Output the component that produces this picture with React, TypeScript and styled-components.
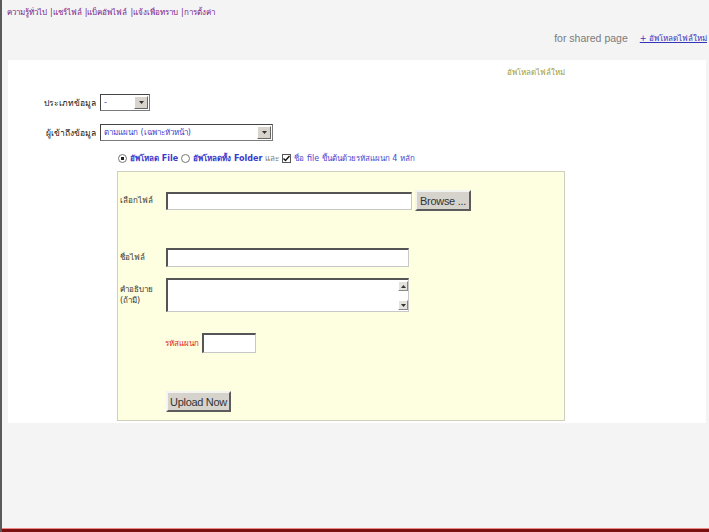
import styled, { createGlobalStyle } from 'styled-components'

const GlobalStyle = createGlobalStyle`
  html, body {
    margin: 0;
    padding: 0;
    background: #f4f4f4;
  }
  body {
    font-family: Tahoma, "DejaVu Sans", "Noto Sans", sans-serif;
    font-size: 8px;
  }
`

const Page = styled.div`
  display: flex;
  flex-direction: column;
  width: 709px;
  height: 532px;
  box-sizing: border-box;
  border-left: 2px solid #5a5a5a;
  background: #f4f4f5;
  overflow: hidden;
`

const TopNav = styled.div`
  display: flex;
  height: 24px;
  padding: 6px 0 0 5px;
  box-sizing: border-box;
  font-size: 8px;
`

const NavLink = styled.a`
  color: #7a1d8a;
  text-decoration: none;
  margin-right: 3px;
`

const SharedBar = styled.div`
  display: flex;
  justify-content: flex-end;
  align-items: center;
  height: 36px;
  padding: 0 2px 8px 0;
  box-sizing: border-box;
`

const SharedLabel = styled.span`
  color: #7b7b7b;
  font-family: "Liberation Sans", Arial, sans-serif;
  font-size: 10.5px;
  margin-right: 12px;
`

const NewLink = styled.a`
  color: #3333bb;
  text-decoration: underline;
  font-size: 8px;
`

const Panel = styled.div`
  background: #fff;
  margin: 0 3px 0 6px;
  height: 363px;
  padding-top: 6px;
  box-sizing: border-box;
`

const PanelTitle = styled.div`
  display: flex;
  justify-content: flex-end;
  padding-right: 141px;
  color: #9a9a3a;
  font-size: 8px;
  height: 24px;
`

const FieldRow = styled.div<{ $top: number }>`
  display: flex;
  align-items: center;
  margin-top: ${(p) => p.$top}px;
`

const FieldLabel = styled.div`
  width: 92px;
  text-align: right;
  padding-right: 4px;
  box-sizing: border-box;
  color: #111;
  font-size: 8.5px;
`

const Select = styled.div<{ $w: number }>`
  display: flex;
  align-items: center;
  justify-content: space-between;
  width: ${(p) => p.$w}px;
  height: 17px;
  box-sizing: border-box;
  border: 1px solid #7a7a7a;
  border-top-color: #444;
  border-left-color: #444;
  background: #fff;
  color: #3c3ccc;
  font-size: 8px;
  padding-left: 3px;
`

const SelectArrow = styled.span`
  display: flex;
  align-items: center;
  justify-content: center;
  width: 14px;
  height: 13px;
  margin-right: 1px;
  background: #d8d4cc;
  border: 1px solid;
  border-color: #fff #666 #666 #fff;
  box-sizing: border-box;
`

const OptionRow = styled.div`
  display: flex;
  align-items: center;
  margin: 10px 0 0 110px;
  height: 14px;
  font-size: 8px;
  white-space: nowrap;
`

const OptStrong = styled.span`
  color: #3a3acc;
  font-weight: bold;
  margin-right: 3px;
`

const OptPlain = styled.span<{ $c: string }>`
  color: ${(p) => p.$c};
  margin-right: 3px;
`

const Radio = styled.span<{ $on?: boolean }>`
  display: inline-block;
  width: 7px;
  height: 7px;
  border: 1px solid #777;
  border-radius: 50%;
  margin-right: 3px;
  background: ${(p) => (p.$on ? 'radial-gradient(circle, #222 0 1.5px, #fff 2px)' : '#fff')};
`

const Check = styled.span`
  display: inline-flex;
  align-items: center;
  justify-content: center;
  width: 9px;
  height: 9px;
  border: 1px solid #555;
  background: #fff;
  margin-right: 3px;
  box-sizing: border-box;
`

const UploadBox = styled.div`
  margin: 6px 0 0 109px;
  width: 448px;
  height: 250px;
  box-sizing: border-box;
  background: #fefee0;
  border: 1px solid #cfcfc0;
  padding: 18px 0 0 2px;
`

const BoxRow = styled.div<{ $top: number; $indent?: number }>`
  display: flex;
  align-items: center;
  margin-top: ${(p) => p.$top}px;
  padding-left: ${(p) => p.$indent ?? 0}px;
`

const BoxLabel = styled.div<{ $red?: boolean }>`
  width: ${(p) => (p.$red ? 'auto' : '46px')};
  margin-right: ${(p) => (p.$red ? '3px' : '0')};
  color: ${(p) => (p.$red ? '#e02020' : '#333')};
  font-size: 8px;
  line-height: 11px;
`

const TextInput = styled.div<{ $w: number; $h: number }>`
  width: ${(p) => p.$w}px;
  height: ${(p) => p.$h}px;
  box-sizing: border-box;
  background: #fff;
  border: 1px solid #c8c8c8;
  border-top: 2px solid #555;
  border-left: 2px solid #555;
  display: flex;
  justify-content: flex-end;
`

const ScrollBar = styled.div`
  display: flex;
  flex-direction: column;
  justify-content: space-between;
  width: 10px;
  padding: 1px 0;
`

const ScrollBtn = styled.span`
  display: flex;
  align-items: center;
  justify-content: center;
  height: 10px;
  background: #e4e2dc;
  border: 1px solid;
  border-color: #fff #888 #888 #fff;
  box-sizing: border-box;
`

const Button = styled.div<{ $w: number }>`
  display: flex;
  align-items: center;
  justify-content: center;
  width: ${(p) => p.$w}px;
  height: 21px;
  box-sizing: border-box;
  background: #d6d3cc;
  border: 2px solid;
  border-color: #f4f4f0 #5c5c5c #5c5c5c #f4f4f0;
  color: #333;
  font-family: "Liberation Sans", Arial, sans-serif;
  font-size: 11px;
  letter-spacing: -0.3px;
`

const Gap = styled.div<{ $w: number }>`
  width: ${(p) => p.$w}px;
  flex: none;
`

const Spacer = styled.div`
  flex: 1;
`

const Footer = styled.div`
  height: 3px;
  background: #7a1010;
  border-top: 1px solid #e88;
`

const Tri = ({ up }: { up?: boolean }) => (
  <svg width="5" height="3" viewBox="0 0 5 3">
    <path d={up ? 'M0 3 L2.5 0 L5 3 Z' : 'M0 0 L5 0 L2.5 3 Z'} fill="#333" />
  </svg>
)

const navItems = ['ความรู้ทั่วไป', '|แชร์ไฟล์', '|แบ็คอัพไฟล์', '|แจ้งเพื่อทราบ', '|การตั้งค่า']

export default function App() {
  return (
    <>
      <GlobalStyle />
      <Page>
        <TopNav>
          {navItems.map((n) => (
            <NavLink key={n} href="#">
              {n}
            </NavLink>
          ))}
        </TopNav>
        <SharedBar>
          <SharedLabel>for shared page</SharedLabel>
          <NewLink href="#">+ อัพโหลดไฟล์ใหม่</NewLink>
        </SharedBar>
        <Panel>
          <PanelTitle>อัพโหลดไฟล์ใหม่</PanelTitle>
          <FieldRow $top={4}>
            <FieldLabel>ประเภทข้อมูล</FieldLabel>
            <Select $w={50}>
              <span>-</span>
              <SelectArrow>
                <Tri />
              </SelectArrow>
            </Select>
          </FieldRow>
          <FieldRow $top={13}>
            <FieldLabel>ผู้เข้าถึงข้อมูล</FieldLabel>
            <Select $w={173}>
              <span>ตามแผนก (เฉพาะหัวหน้า)</span>
              <SelectArrow>
                <Tri />
              </SelectArrow>
            </Select>
          </FieldRow>
          <OptionRow>
            <Radio $on />
            <OptStrong>อัพโหลด File</OptStrong>
            <Radio />
            <OptStrong>อัพโหลดทั้ง Folder</OptStrong>
            <OptPlain $c="#777">และ</OptPlain>
            <Check>
              <svg width="7" height="7" viewBox="0 0 7 7">
                <path d="M0.5 3.5 L2.5 5.5 L6.5 1" stroke="#111" strokeWidth="1.4" fill="none" />
              </svg>
            </Check>
            <OptPlain $c="#4848d0">ชื่อ file ขึ้นต้นด้วยรหัสแผนก 4 หลัก</OptPlain>
          </OptionRow>
          <UploadBox>
            <BoxRow $top={0}>
              <BoxLabel>เลือกไฟล์</BoxLabel>
              <TextInput $w={246} $h={18} />
              <Gap $w={3} />
              <Button $w={56}>Browse ...</Button>
            </BoxRow>
            <BoxRow $top={37}>
              <BoxLabel>ชื่อไฟล์</BoxLabel>
              <TextInput $w={243} $h={19} />
            </BoxRow>
            <BoxRow $top={11}>
              <BoxLabel>
                คำอธิบาย
                <br />
                (ถ้ามี)
              </BoxLabel>
              <TextInput $w={243} $h={34}>
                <ScrollBar>
                  <ScrollBtn>
                    <Tri up />
                  </ScrollBtn>
                  <ScrollBtn>
                    <Tri />
                  </ScrollBtn>
                </ScrollBar>
              </TextInput>
            </BoxRow>
            <BoxRow $top={21} $indent={45}>
              <BoxLabel $red>รหัสแผนก</BoxLabel>
              <TextInput $w={54} $h={20} />
            </BoxRow>
            <BoxRow $top={38} $indent={46}>
              <Button $w={65}>Upload Now</Button>
            </BoxRow>
          </UploadBox>
        </Panel>
        <Spacer />
        <Footer />
      </Page>
    </>
  )
}
